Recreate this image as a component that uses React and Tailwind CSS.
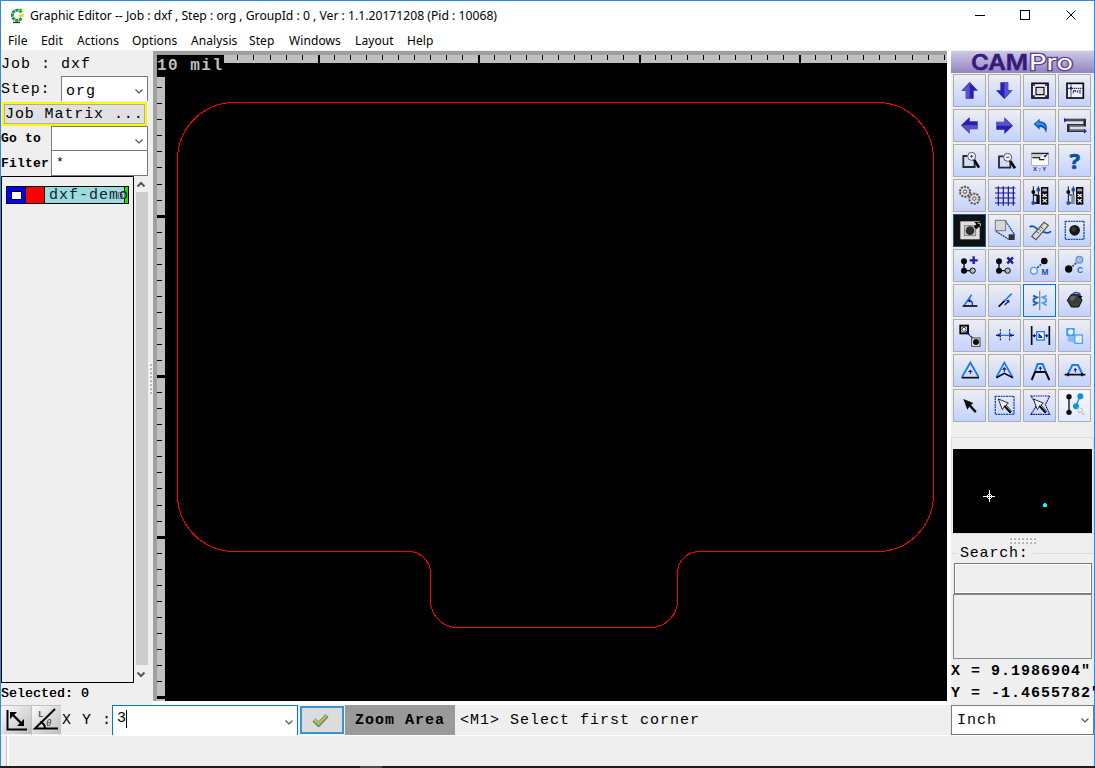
import React from "react";

const MONO = "font-['Liberation_Mono',monospace]";
const UI = "font-['Noto_Sans','Open_Sans',sans-serif]";

const K = "#0a0a0a";
const N = "#14149a";
const B = "#1f7cf0";

function ArrowUp({ turn = 0 }) {
  return (
    <g transform={`rotate(${turn} 49.5 49.5)`}>
      <path d="M25 50 L50 24 L75 50 H62 V74 H38 V50Z" fill="#2a1fb4" />
      <path d="M28 49 L50 26 V73 H39 V49Z" fill="#5a52cc" />
    </g>
  );
}

function Gear({ cx, cy }) {
  return (
    <g>
      <circle cx={cx} cy={cy} r="15" fill="#d4d4d4" stroke="#4a4a4a" strokeWidth="6" strokeDasharray="6 3.4" />
      <circle cx={cx} cy={cy} r="12" fill="#d8d8d8" />
      <circle cx={cx} cy={cy} r="5" fill="#f4f4f4" stroke="#555" strokeWidth="3" />
    </g>
  );
}

function Sliders({ gray }) {
  return (
    <g>
      <path d="M31 22 V72 M46 22 V72" stroke={K} strokeWidth="3" />
      <path d="M31 48 H42 M31 72 H46" stroke={gray ? "#1d50a0" : K} strokeWidth="4" />
      <rect x="40" y="48" width="10" height="27" fill={gray ? "#8a8a8a" : K} />
      <circle cx="31" cy="39" r="6" fill={K} />
      <circle cx="46" cy="32" r="6" fill="#1d50a0" />
      <circle cx="31" cy="72" r="6" fill="#1d50a0" />
      <rect x="54" y="24" width="22" height="53" fill={K} />
      <rect x="58" y="29" width="14" height="8" fill="#aaa" />
      <path d="M59 45 L71 54 M71 45 L59 54 M59 60 L71 70 M71 60 L59 70" stroke="#fff" strokeWidth="3.5" />
    </g>
  );
}

function NodeChain() {
  return (
    <g>
      <path d="M33 38 V65 H58" stroke={K} strokeWidth="4" fill="none" />
      <circle cx="33" cy="37" r="9" fill={K} />
      <circle cx="33" cy="65" r="9" fill={K} />
      <circle cx="59" cy="65" r="8" fill="#bbb" stroke={K} strokeWidth="3" />
    </g>
  );
}

function Cursor({ fill = K, stroke = "none" }) {
  return (
    <path d="M31 30 L61 42 L54 48 L71 67 L66 72 L49 53 L43 62Z" fill={fill} stroke={stroke} strokeWidth="2.5" />
  );
}

const ICONS = [
  <ArrowUp />,
  <ArrowUp turn={180} />,
  <g fill="none" stroke={K}>
    <rect x="27" y="28" width="48" height="44" fill="#f4f4ff" strokeWidth="5" />
    <rect x="39" y="40" width="24" height="22" strokeWidth="3.5" fill="#ddd" />
    <path d="M30 31h6v5h-6z M66 31h6v5h-6z M30 64h6v5h-6z M66 64h6v5h-6z" fill="#2525d0" stroke="none" />
  </g>,
  <g fill="none" stroke={K}>
    <rect x="27" y="28" width="49" height="44" strokeWidth="5" fill="#eef0fb" />
    <path d="M39 31V70 M30 43H74" strokeWidth="3" strokeDasharray="4 2" />
    <circle cx="39" cy="43" r="4" fill={N} stroke="none" />
    <path d="M46 58V50h7v4 M59 49v7 M66 47v12" stroke={N} strokeWidth="3" />
  </g>,
  <ArrowUp turn={270} />,
  <ArrowUp turn={90} />,
  <g>
    <path d="M32 45 L50 29 V37 C70 38 76 51 69 72 C66 60 61 54 50 54 V62Z" fill="#0d55b6" />
    <path d="M36 44 L47 34 V40 C60 41 68 47 69 58 C62 48 56 48 47 48 V52Z" fill="#2d8ff0" />
  </g>,
  <g fill="none">
    <path d="M24 33 H80 V49 H31 V65 H82" stroke="#222" strokeWidth="7.5" />
    <path d="M26 33 H79 M78 49 H32 M33 65 H80" stroke="#8a8a8a" strokeWidth="2.5" />
    <path d="M18 26 L28 33 L18 41Z M78 59 L87 67 L78 74Z" fill="#2525d0" />
  </g>,
  <g fill="none">
    <path d="M43 36 H31 V69 H65 V53" stroke="#2a2a2a" strokeWidth="5.5" />
    <path d="M63 47 L78 71" stroke={K} strokeWidth="8" />
    <circle cx="56" cy="37" r="12" fill="#f7f7f7" stroke="#555" strokeWidth="3" />
    <path d="M51 37h10 M56 32v10" stroke="#3a3ac8" strokeWidth="3" />
  </g>,
  <g fill="none">
    <path d="M47 37 H33 V71 H67 V56" stroke="#2a2a2a" strokeWidth="5.5" />
    <path d="M66 50 L81 73" stroke={K} strokeWidth="8" />
    <circle cx="59" cy="40" r="12" fill="#f7f7f7" stroke="#555" strokeWidth="3" />
    <path d="M54 40h10" stroke="#3a3ac8" strokeWidth="3" />
  </g>,
  <g>
    <rect x="26" y="29" width="50" height="35" fill="#fff" stroke="#999" strokeWidth="2" />
    <path d="M27 30 H62 L54 38 H27Z" fill="#c8c8c8" />
    <path d="M25 28 H77 M28 41 H50 V47 H64" stroke="#222" strokeWidth="3.5" fill="none" />
    <path d="M77 28 L60 36 L66 39 L63 44Z" fill={N} />
    <text x="50" y="82" textAnchor="middle" fontSize="18" fontWeight="bold" textLength="40" fill="#2525c0" fontFamily="Liberation Sans">X : Y</text>
  </g>,
  <text x="50" y="74" textAnchor="middle" fontSize="66" fontWeight="bold" fill="#0750a8" stroke="#0750a8" strokeWidth="2" fontFamily="Noto Sans">?</text>,
  <g>
    <Gear cx={36} cy={38} />
    <Gear cx={64} cy={59} />
  </g>,
  <path d="M31 22V80 M46 22V80 M61 22V80 M76 22V80 M21 27H82 M21 42H82 M21 57H82 M21 72H82" stroke={N} strokeWidth="3.5" />,
  <Sliders />,
  <Sliders gray />,
  <g>
    <rect x="2" y="2" width="95" height="95" fill="#111" />
    <rect x="22" y="22" width="58" height="54" fill="#dedede" />
    <rect x="34" y="35" width="34" height="30" fill="#c9c5c5" stroke="#777" strokeWidth="2.5" />
    <circle cx="51" cy="50" r="13" fill="#332c2c" />
    <path d="M64 24H86V44L78 38L70 46L62 38L70 31Z" fill={K} />
    <path d="M74 28H82V37" stroke="#eee" strokeWidth="2.5" fill="none" />
  </g>,
  <g>
    <path d="M53 21 L80 63 M24 52 L62 76" stroke="#1450a8" strokeWidth="4" strokeDasharray="6 2" />
    <rect x="22" y="19" width="31" height="31" fill="#d6d6d6" stroke="#777" strokeWidth="3" />
    <rect x="62" y="61" width="18" height="17" fill="#333" />
  </g>,
  <g>
    <path d="M20 39 C34 28 42 49 49 49 S69 65 84 52" fill="none" stroke="#1450a8" strokeWidth="5" />
    <path d="M63 25 L76 34 L39 77 L26 67Z" fill="#ddd" stroke="#555" strokeWidth="3.5" />
    <path d="M52 38 L60 44 M46 45 L54 51 M40 52 L48 58" stroke="#555" strokeWidth="3" />
  </g>,
  <g>
    <rect x="22" y="22" width="56" height="54" fill="none" stroke="#1450a8" strokeWidth="4" strokeDasharray="6 2" />
    <circle cx="50" cy="49" r="16" fill="#181818" />
    <circle cx="47" cy="46" r="7" fill="#383838" />
  </g>,
  <g>
    <NodeChain />
    <path d="M62 22V45 M50 34H74" stroke="#2020a0" strokeWidth="7" />
  </g>,
  <g>
    <NodeChain />
    <path d="M58 25L75 43 M75 25L58 43" stroke="#20208c" strokeWidth="7" />
  </g>,
  <g>
    <path d="M61 40 L42 57" stroke="#1450a8" strokeWidth="5" strokeDasharray="6 3" />
    <circle cx="64" cy="36" r="10" fill={K} />
    <circle cx="33" cy="65" r="10" fill="#eef" stroke="#5597f6" strokeWidth="4" />
    <text x="66" y="77" textAnchor="middle" fontSize="25" fontWeight="bold" fill="#1d4e9a" fontFamily="Liberation Sans">M</text>
  </g>,
  <g>
    <path d="M61 36 L35 60" stroke="#1450a8" strokeWidth="5" strokeDasharray="6 3" />
    <circle cx="64" cy="32" r="10" fill="#bbb" stroke="#5597f6" strokeWidth="4" />
    <circle cx="32" cy="60" r="11" fill={K} />
    <text x="66" y="73" textAnchor="middle" fontSize="25" fontWeight="bold" fill="#1d6ec4" fontFamily="Liberation Sans">C</text>
  </g>,
  <g fill="none">
    <path d="M33 65 L56 32" stroke={B} strokeWidth="5" />
    <path d="M29 66 H73" stroke={K} strokeWidth="5" />
    <path d="M48 50 C56 50 59 54 58 63" stroke={N} strokeWidth="3.5" />
    <path d="M43 50 L52 44 V56Z" fill={N} />
  </g>,
  <g fill="none">
    <path d="M32 68 L51 49" stroke={K} strokeWidth="5" />
    <path d="M49 51 L71 29" stroke={B} strokeWidth="5" />
    <path d="M50 63 L60 53" stroke={N} strokeWidth="4" />
    <path d="M64 48 V58 L54 49Z" fill={N} />
  </g>,
  <g fill="none" strokeWidth="6">
    <path d="M50 20V79" stroke="#8b8b8b" strokeWidth="4" />
    <path d="M30 35 L42 40 L32 45 L32 53 L42 57 L30 64" stroke="#2966ad" />
    <path d="M71 35 L59 40 L69 45 L69 53 L59 57 L71 64" stroke="#4da0f4" />
  </g>,
  <g>
    <path d="M39 32 H63 L72 49 L62 69 H40 L28 49Z" fill="#3e3e3e" stroke={K} strokeWidth="3" />
    <path d="M43 31 C51 22 67 25 67 36" stroke="#1d50a0" strokeWidth="4" fill="none" />
    <path d="M59 36H74L67 44Z" fill={K} />
    <path d="M38 37h17l-10 13-9-2z" fill="#666" />
  </g>,
  <g fill="none">
    <rect x="22" y="20" width="23" height="23" fill="#fff" stroke={K} strokeWidth="6" />
    <circle cx="33" cy="31" r="6" stroke="#444" strokeWidth="3" />
    <path d="M38 37 L62 60" stroke={N} strokeWidth="4" strokeDasharray="8 2" />
    <rect x="56" y="57" width="25" height="25" fill="#eee" stroke="#444" strokeWidth="3" />
    <circle cx="69" cy="69" r="9" fill={K} />
  </g>,
  <g fill="none">
    <path d="M37 31V65 M65 31V65" stroke={K} strokeWidth="3" strokeDasharray="6 3" />
    <path d="M24 49H78" stroke={B} strokeWidth="4" />
    <path d="M24 49H37 M65 49H78" stroke={N} strokeWidth="4" />
    <path d="M31 43L38 49L31 55Z M71 43L64 49L71 55Z" fill={N} />
  </g>,
  <g fill="none">
    <path d="M26 21V78 M79 21V78" stroke={K} strokeWidth="5" />
    <path d="M28 50H40 M65 50H77" stroke={N} strokeWidth="3" />
    <path d="M28 50L36 44V56Z M77 50L69 44V56Z" fill={N} />
    <rect x="41" y="38" width="23" height="25" fill="#fff" stroke={B} strokeWidth="4" />
    <path d="M48 44 V55 H58 M48 55 V46 L58 56" stroke={N} strokeWidth="3.5" />
  </g>,
  <g>
    <rect x="25" y="27" width="25" height="24" fill="#3f9bf4" />
    <path d="M29 51 H50 V72 L29 66Z" fill="#6db4f6" opacity=".8" />
    <circle cx="38" cy="39" r="8" fill="#e9f4ff" />
    <rect x="51" y="48" width="22" height="25" fill="#f5f9ff" stroke="#4d9ff5" strokeWidth="4" />
    <circle cx="59" cy="60" r="7" fill="#fff" stroke="#a0ccfb" strokeWidth="2" />
  </g>,
  <g fill="none">
    <path d="M27 69 L52 26 L77 69" stroke={B} strokeWidth="5.5" />
    <path d="M26 71 H78" stroke={K} strokeWidth="5" />
    <path d="M52 60V50" stroke={N} strokeWidth="3" />
    <path d="M45 54L52 47L59 54Z" fill={N} />
  </g>,
  <g fill="none">
    <path d="M25 70 L49 26 L74 70" stroke={B} strokeWidth="5.5" />
    <path d="M25 71 L49 58 L75 71" stroke={K} strokeWidth="5" />
    <path d="M49 54V43" stroke={N} strokeWidth="3" />
    <path d="M42 47L49 39L56 47Z" fill={N} />
  </g>,
  <g fill="none">
    <path d="M36 52 L44 30 H59 L68 52" stroke={B} strokeWidth="6" />
    <path d="M26 78 L36 54 H68 L79 78" stroke={K} strokeWidth="6" />
    <path d="M52 50V40" stroke={N} strokeWidth="3" />
    <path d="M46 44L52 37L58 44Z" fill={N} />
  </g>,
  <g fill="none">
    <path d="M30 60 L43 33 H60 L73 60" stroke={B} strokeWidth="6" />
    <path d="M20 62H82 M31 57V67 M72 57V67" stroke={K} strokeWidth="5" />
    <path d="M52 55V46" stroke={N} strokeWidth="3" />
    <path d="M46 49L52 42L58 49Z" fill={N} />
  </g>,
  <Cursor />,
  <g>
    <rect x="22" y="22" width="56" height="54" fill="none" stroke="#1450a8" strokeWidth="4" strokeDasharray="6 2" />
    <Cursor fill="#eee" stroke={K} />
    <path d="M49 50L68 71" stroke={K} strokeWidth="5" />
  </g>,
  <g>
    <path d="M24 21H80L67 47L80 76H24L42 48Z" fill="none" stroke={N} strokeWidth="3.5" strokeDasharray="5 2" />
    <Cursor fill="#eee" stroke={K} />
    <path d="M49 50L68 71" stroke={K} strokeWidth="5" />
  </g>,
  <g>
    <path d="M33 23V70" stroke={K} strokeWidth="4" />
    <circle cx="33" cy="23" r="8" fill={K} />
    <circle cx="33" cy="70" r="8" fill={K} />
    <path d="M66 22L54 51" stroke="#1090e0" strokeWidth="4" />
    <circle cx="67" cy="22" r="9" fill="#0b90e4" />
    <circle cx="54" cy="52" r="9" fill="#0b90e4" />
    <path d="M59 55L74 61L70 64L79 75L75 78L67 67L63 72Z" fill="#fff" stroke="#999" strokeWidth="2" />
  </g>,
];

function buttonClass(i) {
  if (i === 16) return "h-[33px] w-[33px] border border-[#0a5a9c] bg-black";
  if (i === 26) return "h-[33px] w-[33px] border border-[#0078d7] bg-linear-to-b from-[#f0f0f4] to-[#cfdcff]";
  if (i === 39) return "h-[33px] w-[33px] border border-[#adadad] bg-linear-to-b from-[#f7f7fb] to-[#e2eaff]";
  return "h-[33px] w-[33px] border border-[#adadad] bg-linear-to-b from-[#eeeef2] to-[#c2d1ff]";
}

function Chevron({ up, bold }) {
  return (
    <svg width="10" height="7" viewBox="0 0 10 7" className="shrink-0">
      <path d={up ? "M1.5 5.5L5 2L8.5 5.5" : "M1.5 1.5L5 5L8.5 1.5"} fill="none" stroke="#555" strokeWidth={bold ? 2 : 1.2} />
    </svg>
  );
}

function Grip({ vertical }) {
  const rows = vertical ? 1 : 2;
  const cells = [];
  for (let i = 0; i < (vertical ? 8 : 7); i++) for (let j = 0; j < rows; j++) cells.push([i * 4, j * 4]);
  return (
    <svg width={vertical ? 3 : 28} height={vertical ? 31 : 7} shapeRendering="crispEdges">
      {cells.map(([a, b]) => (
        <g key={`${a}-${b}`} transform={vertical ? `translate(${b} ${a})` : `translate(${a} ${b})`}>
          <rect width="2" height="2" fill="#fff" />
          <rect x="1" y="1" width="2" height="2" fill="#b8b8b8" />
        </g>
      ))}
    </svg>
  );
}

function Drawing() {
  const h = [];
  for (let i = 0; i < 45; i++) {
    const x = Math.round(80.4 + i * 16.05);
    const major = i % 10 === 5;
    h.push(<rect key={`h${i}`} x={x} y="0" width={major ? 2 : 1} height={major ? 8 : 5} fill="#000" />);
  }
  const v = [];
  for (let i = 0; i < 39; i++) {
    const y = Math.round(32.2 + i * 16.05);
    const major = i % 10 === 8;
    v.push(<rect key={`v${i}`} x="0" y={major ? y - 1 : y} width={major ? 8 : 5} height={major ? 3 : 1} fill="#000" />);
  }
  return (
    <svg width="790" height="646" shapeRendering="crispEdges" className="block">
      <rect width="790" height="646" fill="#000" />
      <rect x="67" width="723" height="8" fill="#c0c0c0" />
      <rect y="22" width="8" height="624" fill="#c0c0c0" />
      {h}
      {v}
      <path
        d="M77.5 47.5H720.5A56 57 0 0 1 776.5 104.5V439.5A56 57 0 0 1 720.5 496.5H542.5A22 22 0 0 0 520.5 518.5V545.5A27 27 0 0 1 493.5 572.5H300.5A27 27 0 0 1 273.5 545.5V518.5A22 22 0 0 0 251.5 496.5H77.5A57 57 0 0 1 20.5 439.5V104.5A57 57 0 0 1 77.5 47.5Z"
        fill="none"
        stroke="#f00"
      />
      <text x="0" y="15" fontFamily="Liberation Mono" fontWeight="bold" fontSize="16" textLength="65" fill="#c0c0c0">
        10 mil
      </text>
    </svg>
  );
}

function LeftPanel() {
  return (
    <aside className={`flex w-[152px] shrink-0 flex-col bg-[#efefef] text-black ${MONO}`}>
      <div className="h-[25px] whitespace-pre text-[15px] leading-[27px] tracking-[1px]">Job : dxf</div>
      <div className="flex h-[25px] w-[147px] justify-between">
        <span className="text-[15px] leading-[27px] tracking-[0.9px]">Step:</span>
        <div className="flex w-[87px] items-center justify-between border border-b-0 border-[#7a7a7a] bg-white pt-1 pr-[3px] pl-1 text-[15px] leading-none tracking-[1px]">
          org
          <Chevron />
        </div>
      </div>
      <div className="flex h-[25px] w-[147px] items-center pl-px">
        <button className="h-[24px] w-[145px] border border-[#ffef00] bg-[#ff0] p-px text-left">
          <span className="block h-[20px] border border-[#adadad] bg-[#e1e1e1] text-[15px] leading-[20px] tracking-[0.9px] whitespace-pre">Job Matrix ...</span>
        </button>
      </div>
      <div className="flex h-[25px] w-[147px] justify-between text-[13px] font-bold tracking-[0.2px]">
        <span className="leading-[25px]">Go to</span>
        <div className="flex w-[97px] items-center justify-end border border-[#7a7a7a] bg-white pt-[6px] pr-[3px]">
          <Chevron />
        </div>
      </div>
      <div className="flex h-[25px] w-[147px] justify-between text-[13px] font-bold tracking-[0.2px]">
        <span className="leading-[25px]">Filter</span>
        <div className="w-[97px] border border-t-0 border-[#7a7a7a] bg-white pl-1 leading-[24px] font-normal">*</div>
      </div>
      <div className="flex h-[507px]">
        <div className="w-[133px] shrink-0 border border-black pt-[9px] pl-1">
          <div className="relative flex h-[18px] w-[123px] border border-black">
            <div className="flex w-[19px] items-center justify-center border-r border-black bg-[#00f]">
              <span className="h-[9px] w-[11px] border border-black bg-white" />
            </div>
            <div className="w-[19px] border-r border-black bg-[#f00]" />
            <div className="w-[80px] border-r border-black bg-[#9cdcdc]" />
            <div className="flex-1 bg-[#0e0]" />
            <svg width="7" height="7" className="absolute top-[5px] left-[111px]">
              <path d="M.5 .5H6.5V6.5H.5Z M2.5 2.5H4.5V4.5H2.5Z" fill="none" stroke="#777" />
            </svg>
            <span className="absolute top-0 left-[42px] text-[15px] leading-[18px] tracking-[1px] whitespace-nowrap text-[#123]">dxf-demo</span>
          </div>
        </div>
        <div className="flex w-[14px] shrink-0 flex-col items-center">
          <div className="flex h-[16px] items-center"><Chevron up bold /></div>
          <div className="ml-[1px] h-[473px] w-[12px] bg-[#cdcdcd]" />
          <div className="flex flex-1 items-center"><Chevron bold /></div>
        </div>
        <div className="flex items-center pb-[102px] pl-px"><Grip vertical /></div>
      </div>
      <div className="h-[22px] text-[13px] leading-[21px] tracking-[0.2px] whitespace-pre text-black [text-shadow:0.3px_0_0_#000]">Selected: 0</div>
    </aside>
  );
}

function RightPanel() {
  return (
    <aside className={`flex w-[143px] shrink-0 flex-col bg-[#efefef] text-black ${MONO}`}>
      <div className="h-[22px] bg-linear-to-b from-[#cfc9e6] to-[#9384c0]">
        <svg width="143" height="22" className="overflow-visible" fontFamily="Inter" fontWeight="600" fontSize="21">
          <text x="20" y="18.5" textLength="57" lengthAdjust="spacingAndGlyphs" fill="#35197c" stroke="#35197c" strokeWidth=".5">CAM</text>
          <text x="78" y="18.5" textLength="44" lengthAdjust="spacingAndGlyphs" fill="#fff" stroke="#5b4496" strokeWidth="2.4" paintOrder="stroke" fontWeight="400">Pro</text>
        </svg>
      </div>
      <div className="grid grid-cols-[repeat(4,33px)] gap-[2px] pt-px pl-[2px]">
        {ICONS.map((icon, i) => (
          <button key={i} className={buttonClass(i)}>
            <svg viewBox="3 3 93 93" className="block h-[31px] w-[31px]">{icon}</svg>
          </button>
        ))}
      </div>
      <div className="mt-[15px] h-[97px] border border-[#dcdcdc] pt-[11px] pl-px">
        <svg width="139" height="84" className="block bg-black" shapeRendering="crispEdges">
          <path d="M36.5 41V53 M30 47.5H42" stroke="#fff" />
          <path d="M36.5 44.5L39.5 47.5L36.5 50.5L33.5 47.5Z" fill="none" stroke="#fff" />
          <path d="M91 54h2v1h1v3h-4v-3h1z" fill="#0ff" />
        </svg>
      </div>
      <div className="flex h-[9px] items-center justify-center pt-[3px]"><Grip /></div>
      <div className="flex h-[20px] items-center text-[15px] leading-none tracking-[0.8px]">
        <span className="mr-[2px] h-px w-[7px] bg-[#dcdcdc]" />
        Search:
        <span className="ml-1 h-px flex-1 bg-[#dcdcdc]" />
      </div>
      <div className="ml-[3px] h-[31px] w-[138px] border border-[#7a7a7a] bg-[#efefef] shadow-[inset_0_0_0_1px_#fff]" />
      <div className="ml-[2px] h-[65px] w-[139px] border border-[#828790]" />
      <div className="h-[23px] text-[15px] leading-[26px] font-bold tracking-[1px] whitespace-pre">X = 9.1986904"</div>
      <div className="h-[23px] text-[15px] leading-[24px] font-bold tracking-[1px] whitespace-pre">Y = -1.4655782"</div>
    </aside>
  );
}

function CommandBar() {
  return (
    <div className={`flex h-[30px] bg-[#efefef] text-[15px] tracking-[1px] text-black ${MONO}`}>
      <svg width="61" height="30" className="shrink-0">
        <defs>
          <linearGradient id="mode" x1="0" y1="0" x2="1" y2="1">
            <stop offset="0" stopColor="#fafafa" />
            <stop offset="1" stopColor="#bdbdbd" />
          </linearGradient>
        </defs>
        <rect x="1" y="1" width="29" height="28" fill="url(#mode)" />
        <rect x="31" y="1" width="29" height="28" fill="url(#mode)" />
        <path d="M0 .5H60 M30.5 0V30" stroke="#c0c0c0" />
        <path d="M6.5 5V24.5H26" fill="none" stroke="#000" strokeWidth="2" />
        <path d="M11 9L21 19" stroke="#000" strokeWidth="2.4" />
        <path d="M9 7H16L9 14Z M23 21H16L23 14Z" fill="#000" />
        <path d="M54 4L34 23.5H57" fill="none" stroke="#000" strokeWidth="2" />
        <path d="M39 17C43 18 44 20 44 24" fill="none" stroke="#000" strokeWidth="2" />
        <text x="37" y="12" fontSize="9" fontWeight="bold" fill="#555">L</text>
        <text x="45" y="21" fontSize="9" fill="#333" fontStyle="italic">θ</text>
      </svg>
      <span className="w-[50px] pt-px leading-[29px] whitespace-pre">X Y :</span>
      <div className="flex w-[186px] items-center justify-between border border-b-0 border-[#0078d7] bg-white pr-[3px] pl-1">
        <span className="mb-1 flex h-[18px] items-center border-r border-black leading-none tracking-normal">3</span>
        <span className="mt-[3px]"><Chevron /></span>
      </div>
      <button className="mt-px ml-[2px] flex h-[28px] w-[44px] items-center justify-center border-2 border-[#3d91d2] bg-[#dcdcdc]">
        <svg width="17" height="14" viewBox="0 0 17 14" className="mr-1">
          <path d="M2 7L6.5 11.5L15 2.5" fill="none" stroke="#6d8c4f" strokeWidth="4.5" />
          <path d="M2.5 7L6.5 10.8L14.5 2.5" fill="none" stroke="#a3c27c" strokeWidth="2.5" />
        </svg>
      </button>
      <div className="ml-px w-[110px] bg-[#9a9a9a] pl-[10px] leading-[31px] font-bold">Zoom Area</div>
      <span className="flex-1 pl-[5px] leading-[32px] whitespace-pre">&lt;M1&gt; Select first corner</span>
      <div className="flex w-[143px] items-center justify-between border border-[#7a7a7a] bg-white pt-px pr-[3px] pl-[5px] leading-none">
        Inch
        <Chevron />
      </div>
    </div>
  );
}

const MENU = [
  ["File", "w-[33px]"],
  ["Edit", "w-[36px]"],
  ["Actions", "w-[55px]"],
  ["Options", "w-[59px]"],
  ["Analysis", "w-[58px]"],
  ["Step", "w-[40px]"],
  ["Windows", "w-[66px]"],
  ["Layout", "w-[52px]"],
  ["Help", "w-[40px]"],
];

export default function App() {
  return (
    <div className="flex h-[768px] w-[1095px] flex-col overflow-hidden bg-[#1e1e22]">
      <div className="flex h-[766px] flex-col border-t border-r border-l border-[#2f8ae6] bg-white">
        <header className={`flex h-[29px] shrink-0 items-center pl-[8px] ${UI}`}>
          <svg width="16" height="16" viewBox="0 0 16 16" className="mr-[5px]">
            <path d="M12.5 4.5A5 5 0 1 0 12.5 10" fill="none" stroke="#249447" strokeWidth="3" strokeDasharray="3 .6" />
            <path d="M4 14.5H11" stroke="#243c30" strokeWidth="1.3" />
            <path d="M9 7L15 5.5L14 9L10 9Z" fill="#e5dc21" />
            <path d="M10 .5L13.5 1L12 4.5Z" fill="#62b92e" />
          </svg>
          <svg width="468" height="20" className="overflow-visible" fontFamily="Noto Sans, Open Sans, sans-serif">
            <text x="0" y="14" fontSize="12" textLength="467" lengthAdjust="spacingAndGlyphs" fill="#000">
              Graphic Editor -- Job : dxf , Step : org , GroupId : 0 , Ver : 1.1.20171208 (Pid : 10068)
            </text>
          </svg>
          <svg width="103" height="12" className="mr-[17px] mb-px ml-auto" shapeRendering="crispEdges" fill="none" stroke="#000">
            <path d="M1 6.5H11" />
            <rect x="46.5" y="1.5" width="9" height="9" />
            <path d="M92.5 1.5L101.5 10.5M101.5 1.5L92.5 10.5" shapeRendering="auto" />
          </svg>
        </header>
        <nav className={`flex h-[20px] shrink-0 pl-[7px] text-[12px] leading-[21px] tracking-[0.1px] text-black ${UI}`}>
          {MENU.map(([label, width]) => (
            <span key={label} className={`${width} shrink-0`}>{label}</span>
          ))}
        </nav>
        <div className="h-px shrink-0 bg-[#efefef]" />
        <main className="flex h-[654px] shrink-0">
          <LeftPanel />
          <section className="h-[650px] w-[794px] border-t-4 border-l-4 border-[#a0a0a0]">
            <Drawing />
          </section>
          <div className="w-1 bg-white" />
          <RightPanel />
        </main>
        <CommandBar />
        <footer className="mt-px flex h-[30px] bg-[#efefef]">
          <div className="w-[6px] border-r border-[#c4c4c4]" />
          <div className="w-[2px] bg-white" />
        </footer>
      </div>
      <div className="flex h-[2px]">
        <div className="ml-[360px] w-[22px] bg-[#4a4a50]" />
      </div>
    </div>
  );
}
